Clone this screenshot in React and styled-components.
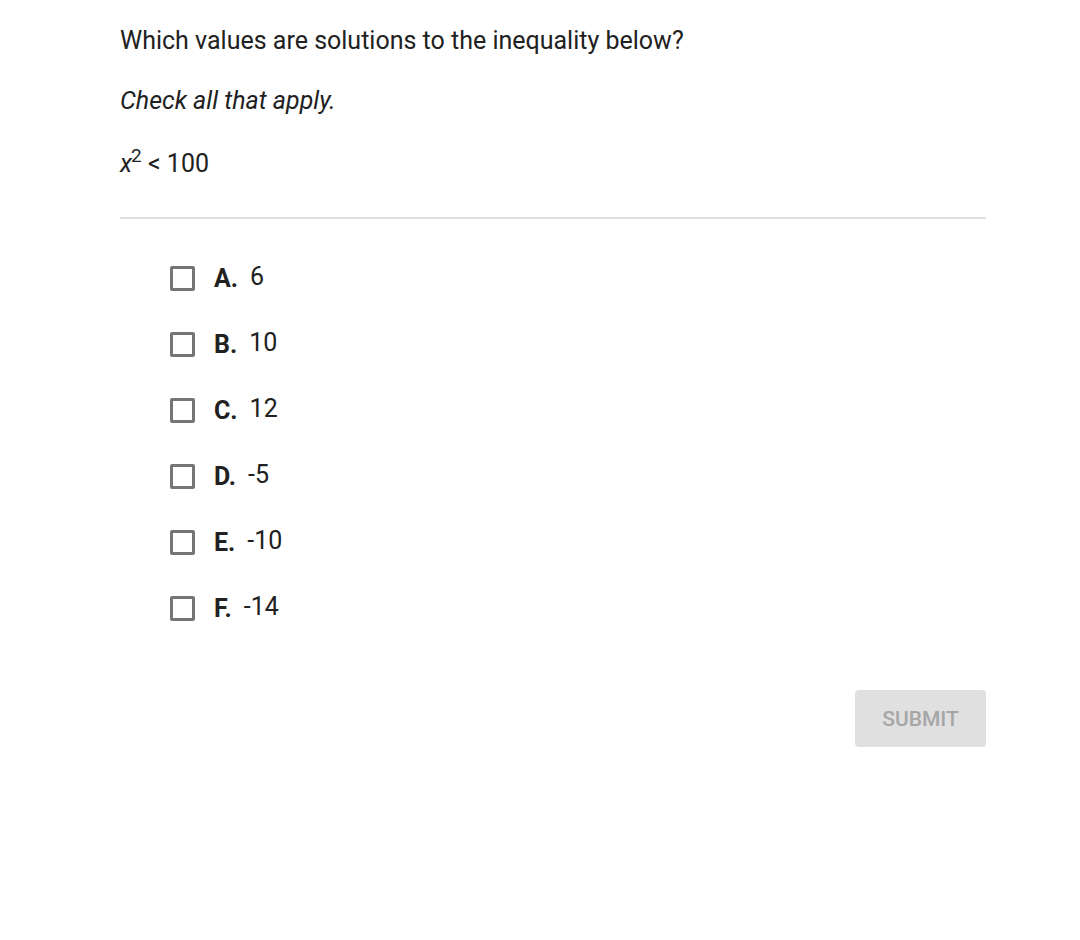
import React from "react";
import styled, { createGlobalStyle } from "styled-components";

const GlobalStyle = createGlobalStyle`
  body {
    margin: 0;
    background: #fff;
    font-family: Roboto, "Liberation Sans", sans-serif;
    color: #212121;
  }
`;

const options = [
  { letter: "A.", value: "6" },
  { letter: "B.", value: "10" },
  { letter: "C.", value: "12" },
  { letter: "D.", value: "-5" },
  { letter: "E.", value: "-10" },
  { letter: "F.", value: "-14" },
];

export default function App() {
  return (
    <>
      <GlobalStyle />
      <Page>
        <Prompt>Which values are solutions to the inequality below?</Prompt>
        <Hint>Check all that apply.</Hint>
        <Formula>
          <i>x</i>
          <sup>2</sup> &lt; 100
        </Formula>
        <Divider />
        <OptionList>
          {options.map(o => (
            <Option key={o.letter}>
              <Box type="checkbox" />
              <Letter>{o.letter}</Letter>
              <Value>{o.value}</Value>
            </Option>
          ))}
        </OptionList>
        <Footer>
          <SubmitButton disabled>SUBMIT</SubmitButton>
        </Footer>
      </Page>
    </>
  );
}

const Page = styled.div`
  width: 866px;
  padding: 26px 0 0 120px;
`;

const Prompt = styled.p`
  margin: 0;
  font-size: 25px;
  line-height: 30px;
`;

const Hint = styled.p`
  margin: 30px 0 0;
  font-size: 25px;
  line-height: 30px;
  font-style: italic;
`;

const Formula = styled.p`
  margin: 33px 0 0;
  font-size: 25px;
  line-height: 30px;
  i {
    font-style: italic;
  }
  sup {
    font-size: 19px;
    line-height: 0;
    position: relative;
    top: -1px;
    margin-left: -1px;
  }
`;

const Divider = styled.hr`
  margin: 38px 0 0;
  border: 0;
  height: 2px;
  background: #e0e0e0;
`;

const OptionList = styled.div`
  display: flex;
  flex-direction: column;
  gap: 36px;
  margin-top: 44px;
  padding-left: 50px;
`;

const Option = styled.label`
  display: flex;
  align-items: center;
  height: 30px;
  font-size: 25px;
`;

const Box = styled.input`
  appearance: none;
  margin: 0 19px 0 0;
  width: 25px;
  height: 25px;
  border: 3px solid #757575;
  border-radius: 2px;
  box-sizing: border-box;
  background: #fff;
`;

const Letter = styled.span`
  font-weight: 700;
  margin-right: 12px;
  margin-top: 1px;
`;

const Value = styled.span`
  margin-top: -3px;
`;

const Footer = styled.div`
  display: flex;
  justify-content: flex-end;
  margin-top: 67px;
`;

const SubmitButton = styled.button`
  width: 131px;
  height: 57px;
  border: 0;
  border-radius: 4px;
  background: #e0e0e0;
  color: #a6a6a6;
  font-family: Roboto, "Liberation Sans", sans-serif;
  font-size: 21px;
  font-weight: 500;
`;
